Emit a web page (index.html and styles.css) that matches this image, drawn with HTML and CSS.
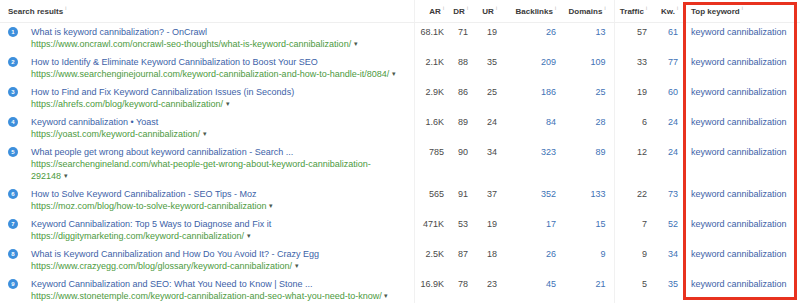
FILE: index.html
```html
<!DOCTYPE html>
<html lang="en">
<head>
  <meta charset="UTF-8">
  <title>Search results</title>
  <link rel="stylesheet" href="styles.css">
</head>
<body>
  <div class="report">
    <table class="serp">
      <colgroup>
        <col class="c-result"><col class="c-ar"><col class="c-dr"><col class="c-ur"><col class="c-bl">
        <col class="c-dom"><col class="c-tr"><col class="c-kw"><col class="c-top">
      </colgroup>
      <thead>
        <tr>
          <th class="left">Search results<span class="info">i</span></th>
          <th class="sep">AR<span class="info">i</span></th>
          <th>DR<span class="info">i</span></th>
          <th>UR<span class="info">i</span></th>
          <th>Backlinks<span class="info">i</span></th>
          <th class="pad">Domains<span class="info">i</span></th>
          <th class="sep">Traffic<span class="info">i</span></th>
          <th>Kw.<span class="info">i</span></th>
          <th class="left kwcol">Top keyword<span class="info">i</span></th>
        </tr>
      </thead>
      <tbody id="rows"></tbody>
    </table>
    <div class="highlight"></div>
  </div>
  <script>
    const results = [
      ['What is keyword cannibalization? - OnCrawl', 'https://www.oncrawl.com/oncrawl-seo-thoughts/what-is-keyword-cannibalization/', '68.1K', 71, 19, 26, 13, 57, 61],
      ['How to Identify & Eliminate Keyword Cannibalization to Boost Your SEO', 'https://www.searchenginejournal.com/keyword-cannibalization-and-how-to-handle-it/8084/', '2.1K', 88, 35, 209, 109, 33, 77],
      ['How to Find and Fix Keyword Cannibalization Issues (in Seconds)', 'https://ahrefs.com/blog/keyword-cannibalization/', '2.9K', 86, 25, 186, 25, 19, 60],
      ['Keyword cannibalization • Yoast', 'https://yoast.com/keyword-cannibalization/', '1.6K', 89, 24, 84, 28, 6, 24],
      ['What people get wrong about keyword cannibalization - Search ...', 'https://searchengineland.com/what-people-get-wrong-about-keyword-cannibalization-<br>292148', '785', 90, 34, 323, 89, 12, 24],
      ['How to Solve Keyword Cannibalization - SEO Tips - Moz', 'https://moz.com/blog/how-to-solve-keyword-cannibalization', '565', 91, 37, 352, 133, 22, 73],
      ['Keyword Cannibalization: Top 5 Ways to Diagnose and Fix it', 'https://diggitymarketing.com/keyword-cannibalization/', '471K', 53, 19, 17, 15, 7, 52],
      ['What is Keyword Cannibalization and How Do You Avoid It? - Crazy Egg', 'https://www.crazyegg.com/blog/glossary/keyword-cannibalization/', '2.5K', 87, 18, 26, 9, 9, 34],
      ['Keyword Cannibalization and SEO: What You Need to Know | Stone ...', 'https://www.stonetemple.com/keyword-cannibalization-and-seo-what-you-need-to-know/', '16.9K', 78, 23, 45, 21, 5, 35]
    ];
    const html = results.map((r, i) => `
      <tr>
        <td class="left">
          <div class="result">
            <span class="badge">${i + 1}</span>
            <div>
              <a class="title">${r[0].replace('&', '&amp;')}</a>
              <div class="url">${r[1]} <span class="caret">▾</span></div>
            </div>
          </div>
        </td>
        <td class="sep">${r[2]}</td>
        <td>${r[3]}</td>
        <td>${r[4]}</td>
        <td class="link">${r[5]}</td>
        <td class="link pad">${r[6]}</td>
        <td class="sep">${r[7]}</td>
        <td class="link">${r[8]}</td>
        <td class="left kwcol"><a class="kw">keyword cannibalization</a></td>
      </tr>`).join('');
    document.getElementById('rows').innerHTML = html;
  </script>
</body>
</html>
```
FILE: styles.css
```css
body {
  margin: 0;
  background-color: #ffffff;
  font-family: 'Liberation Sans', Arial, sans-serif;
  color: #4a4a4a;
}
.report {
  position: relative;
  width: 800px;
  height: 303px;
  overflow: hidden;
}
.serp {
  width: 800px;
  table-layout: fixed;
  border-collapse: collapse;
  font-size: 9px;
}
.c-result { width: 414px; }
.c-ar { width: 33px; }
.c-dr { width: 24px; }
.c-ur { width: 29px; }
.c-bl { width: 59px; }
.c-dom { width: 55px; }
.c-tr { width: 36px; }
.c-kw { width: 31px; }
.c-top { width: 119px; }
th {
  height: 22px;
  padding: 0 3px 0 0;
  font-size: 8px;
  font-weight: bold;
  color: #3a3a3a;
  text-align: right;
  white-space: nowrap;
  border-bottom: 1px solid #efefef;
}
td {
  height: 24px;
  padding: 3px 3px 3px 0;
  line-height: 12px;
  text-align: right;
  vertical-align: top;
  white-space: nowrap;
}
th.left, td.left {
  text-align: left;
}
th.left {
  padding-left: 8px;
}
.kwcol {
  padding-left: 10px !important;
}
.sep {
  border-left: 1px solid #f1f1f1;
}
.pad {
  padding-right: 8px;
}
.info {
  font-size: 5px;
  font-weight: normal;
  color: #b5b5b5;
  line-height: 0;
  vertical-align: 4px;
  margin-left: 2px;
}
.result {
  display: flex;
  align-items: flex-start;
  gap: 13px;
  padding-left: 8px;
}
.badge {
  flex: none;
  width: 10px;
  height: 10px;
  margin-top: 1px;
  border-radius: 50%;
  background-color: #3d8fdc;
  color: #ffffff;
  font-size: 6px;
  font-weight: bold;
  line-height: 10px;
  text-align: center;
}
.title {
  display: block;
  height: 12px;
  color: #3c62a8;
}
.url {
  color: #4c9a3e;
  white-space: normal;
}
.caret {
  color: #4d5a4d;
  font-size: 7px;
  line-height: 0;
  vertical-align: 1px;
}
.link {
  color: #4072b6;
}
.kw {
  color: #3c62a8;
}
.highlight {
  position: absolute;
  left: 683px;
  top: 2px;
  width: 108px;
  height: 292px;
  border: 3px solid #e8321f;
}
```
